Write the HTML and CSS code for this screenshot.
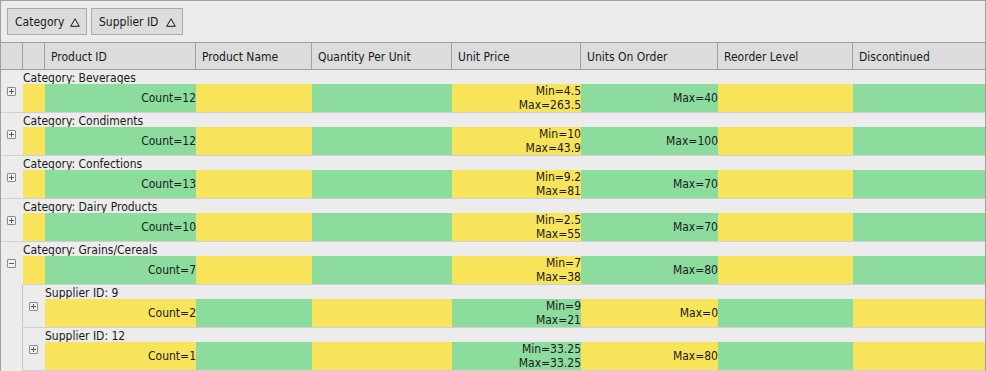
FILE: index.html
```html
<!DOCTYPE html>
<html>
<head>
<meta charset="utf-8">
<link rel="stylesheet" href="styles.css">
</head>
<body>
<div class="grid">
  <div class="group-panel">
    <div class="gbtn w-cat"><span>Category</span><svg class="tri" width="10" height="9" viewBox="0 0 10 9"><polygon points="5,0.8 9.3,8.3 0.7,8.3" fill="none" stroke="#1a1a1a" stroke-width="1"/></svg></div>
    <div class="gbtn w-sup"><span>Supplier ID</span><svg class="tri" width="10" height="9" viewBox="0 0 10 9"><polygon points="5,0.8 9.3,8.3 0.7,8.3" fill="none" stroke="#1a1a1a" stroke-width="1"/></svg></div>
  </div>

  <div class="header">
    <div class="hcell w-ind"></div>
    <div class="hcell w-ind"></div>
    <div class="hcell w-pid">Product ID</div>
    <div class="hcell w-pname">Product Name</div>
    <div class="hcell w-qty">Quantity Per Unit</div>
    <div class="hcell w-up">Unit Price</div>
    <div class="hcell w-uoo">Units On Order</div>
    <div class="hcell w-rl">Reorder Level</div>
    <div class="hcell w-disc last">Discontinued</div>
  </div>

  <div class="group">
    <div class="expander"><span class="exp-icon plus"></span></div>
    <div class="group-body">
      <div class="group-label">Category: Beverages</div>
      <div class="summary">
        <div class="cell w-ind yel"></div>
        <div class="cell w-pid grn">Count=12</div>
        <div class="cell w-pname yel"></div>
        <div class="cell w-qty grn"></div>
        <div class="cell w-up yel"><span>Min=4.5</span><span>Max=263.5</span></div>
        <div class="cell w-uoo grn">Max=40</div>
        <div class="cell w-rl yel"></div>
        <div class="cell w-disc grn"></div>
      </div>
    </div>
  </div>

  <div class="group">
    <div class="expander"><span class="exp-icon plus"></span></div>
    <div class="group-body">
      <div class="group-label">Category: Condiments</div>
      <div class="summary">
        <div class="cell w-ind yel"></div>
        <div class="cell w-pid grn">Count=12</div>
        <div class="cell w-pname yel"></div>
        <div class="cell w-qty grn"></div>
        <div class="cell w-up yel"><span>Min=10</span><span>Max=43.9</span></div>
        <div class="cell w-uoo grn">Max=100</div>
        <div class="cell w-rl yel"></div>
        <div class="cell w-disc grn"></div>
      </div>
    </div>
  </div>

  <div class="group">
    <div class="expander"><span class="exp-icon plus"></span></div>
    <div class="group-body">
      <div class="group-label">Category: Confections</div>
      <div class="summary">
        <div class="cell w-ind yel"></div>
        <div class="cell w-pid grn">Count=13</div>
        <div class="cell w-pname yel"></div>
        <div class="cell w-qty grn"></div>
        <div class="cell w-up yel"><span>Min=9.2</span><span>Max=81</span></div>
        <div class="cell w-uoo grn">Max=70</div>
        <div class="cell w-rl yel"></div>
        <div class="cell w-disc grn"></div>
      </div>
    </div>
  </div>

  <div class="group">
    <div class="expander"><span class="exp-icon plus"></span></div>
    <div class="group-body">
      <div class="group-label">Category: Dairy Products</div>
      <div class="summary">
        <div class="cell w-ind yel"></div>
        <div class="cell w-pid grn">Count=10</div>
        <div class="cell w-pname yel"></div>
        <div class="cell w-qty grn"></div>
        <div class="cell w-up yel"><span>Min=2.5</span><span>Max=55</span></div>
        <div class="cell w-uoo grn">Max=70</div>
        <div class="cell w-rl yel"></div>
        <div class="cell w-disc grn"></div>
      </div>
    </div>
  </div>

  <div class="group expanded">
    <div class="expander"><span class="exp-icon minus"></span></div>
    <div class="group-body">
      <div class="group-label">Category: Grains/Cereals</div>
      <div class="summary">
        <div class="cell w-ind yel"></div>
        <div class="cell w-pid grn">Count=7</div>
        <div class="cell w-pname yel"></div>
        <div class="cell w-qty grn"></div>
        <div class="cell w-up yel"><span>Min=7</span><span>Max=38</span></div>
        <div class="cell w-uoo grn">Max=80</div>
        <div class="cell w-rl yel"></div>
        <div class="cell w-disc grn"></div>
      </div>
    </div>
  </div>

  <div class="children">
    <div class="group sub">
      <div class="expander"><span class="exp-icon plus"></span></div>
      <div class="group-body">
        <div class="group-label">Supplier ID: 9</div>
        <div class="summary">
          <div class="cell w-pid yel">Count=2</div>
          <div class="cell w-pname grn"></div>
          <div class="cell w-qty yel"></div>
          <div class="cell w-up grn"><span>Min=9</span><span>Max=21</span></div>
          <div class="cell w-uoo yel">Max=0</div>
          <div class="cell w-rl grn"></div>
          <div class="cell w-disc yel"></div>
        </div>
      </div>
    </div>
    <div class="group sub">
      <div class="expander"><span class="exp-icon plus"></span></div>
      <div class="group-body">
        <div class="group-label">Supplier ID: 12</div>
        <div class="summary">
          <div class="cell w-pid yel">Count=1</div>
          <div class="cell w-pname grn"></div>
          <div class="cell w-qty yel"></div>
          <div class="cell w-up grn"><span>Min=33.25</span><span>Max=33.25</span></div>
          <div class="cell w-uoo yel">Max=80</div>
          <div class="cell w-rl grn"></div>
          <div class="cell w-disc yel"></div>
        </div>
      </div>
    </div>
  </div>
</div>
</body>
</html>
```

FILE: styles.css
```css
html, body {
  margin: 0;
  padding: 0;
  background: #ffffff;
}

body {
  font-family: "DejaVu Sans Condensed", "DejaVu Sans", sans-serif;
  font-stretch: condensed;
  font-size: 12px;
  color: #1a1a1a;
}

.grid {
  width: 986px;
  height: 371px;
  box-sizing: border-box;
  border: 1px solid #a0a0a0;
  border-bottom: none;
  background: #ececec;
  overflow: hidden;
}

/* group panel */
.group-panel {
  height: 42px;
  box-sizing: border-box;
  border-bottom: 1px solid #a0a0a0;
  padding: 7px 0 0 6px;
  display: flex;
  gap: 4px;
  align-items: flex-start;
}

.gbtn {
  height: 27px;
  box-sizing: border-box;
  border: 1px solid #ababab;
  background: #dcdcdc;
  display: flex;
  align-items: center;
  justify-content: space-between;
  padding: 1px 6px 0 7px;
}

.w-cat { width: 80px; }
.w-sup { width: 92px; }

.tri { display: block; }

/* header */
.header {
  height: 27px;
  box-sizing: border-box;
  border-bottom: 1px solid #a0a0a0;
  background: #dcdcdc;
  display: flex;
}

.hcell {
  box-sizing: border-box;
  border-right: 1px solid #a0a0a0;
  padding: 1px 0 0 6px;
  display: flex;
  align-items: center;
  white-space: nowrap;
}

.hcell.last { border-right: none; }

.w-ind { width: 22px; flex: none; }
.w-pid { width: 151px; flex: none; }
.w-pname { width: 116px; flex: none; }
.w-qty { width: 140px; flex: none; }
.w-up { width: 129px; flex: none; }
.w-uoo { width: 137px; flex: none; }
.w-rl { width: 135px; flex: none; }
.w-disc { width: 132px; flex: none; }

/* groups */
.group {
  display: flex;
  border-bottom: 1px solid #d0d0d0;
}

.group.expanded { border-bottom: none; }

.expander {
  width: 22px;
  flex: none;
  display: flex;
  align-items: center;
  justify-content: center;
}

.exp-icon {
  position: relative;
  width: 9px;
  height: 9px;
  box-sizing: border-box;
  border: 1px solid #8c8c8c;
  border-radius: 1px;
  background: #f2f2f2;
  margin-right: 1px;
}

.exp-icon::before {
  content: "";
  position: absolute;
  left: 1px;
  top: 3px;
  width: 5px;
  height: 1px;
  background: #5a5a5a;
}

.exp-icon.plus::after {
  content: "";
  position: absolute;
  left: 3px;
  top: 1px;
  width: 1px;
  height: 5px;
  background: #5a5a5a;
}

.group-body {
  display: flex;
  flex-direction: column;
}

.group-label {
  height: 14px;
  line-height: 16px;
  white-space: nowrap;
}

.summary {
  display: flex;
  height: 28px;
}

.cell {
  height: 28px;
  display: flex;
  flex-direction: column;
  justify-content: center;
  align-items: flex-end;
  line-height: 14px;
  white-space: nowrap;
}

.yel { background: #f8e45a; }
.grn { background: #8cdc9d; }

.children {
  margin-left: 21px;
  border-left: 1px solid #c4c4c4;
  border-top: 1px solid #d0d0d0;
}
```
